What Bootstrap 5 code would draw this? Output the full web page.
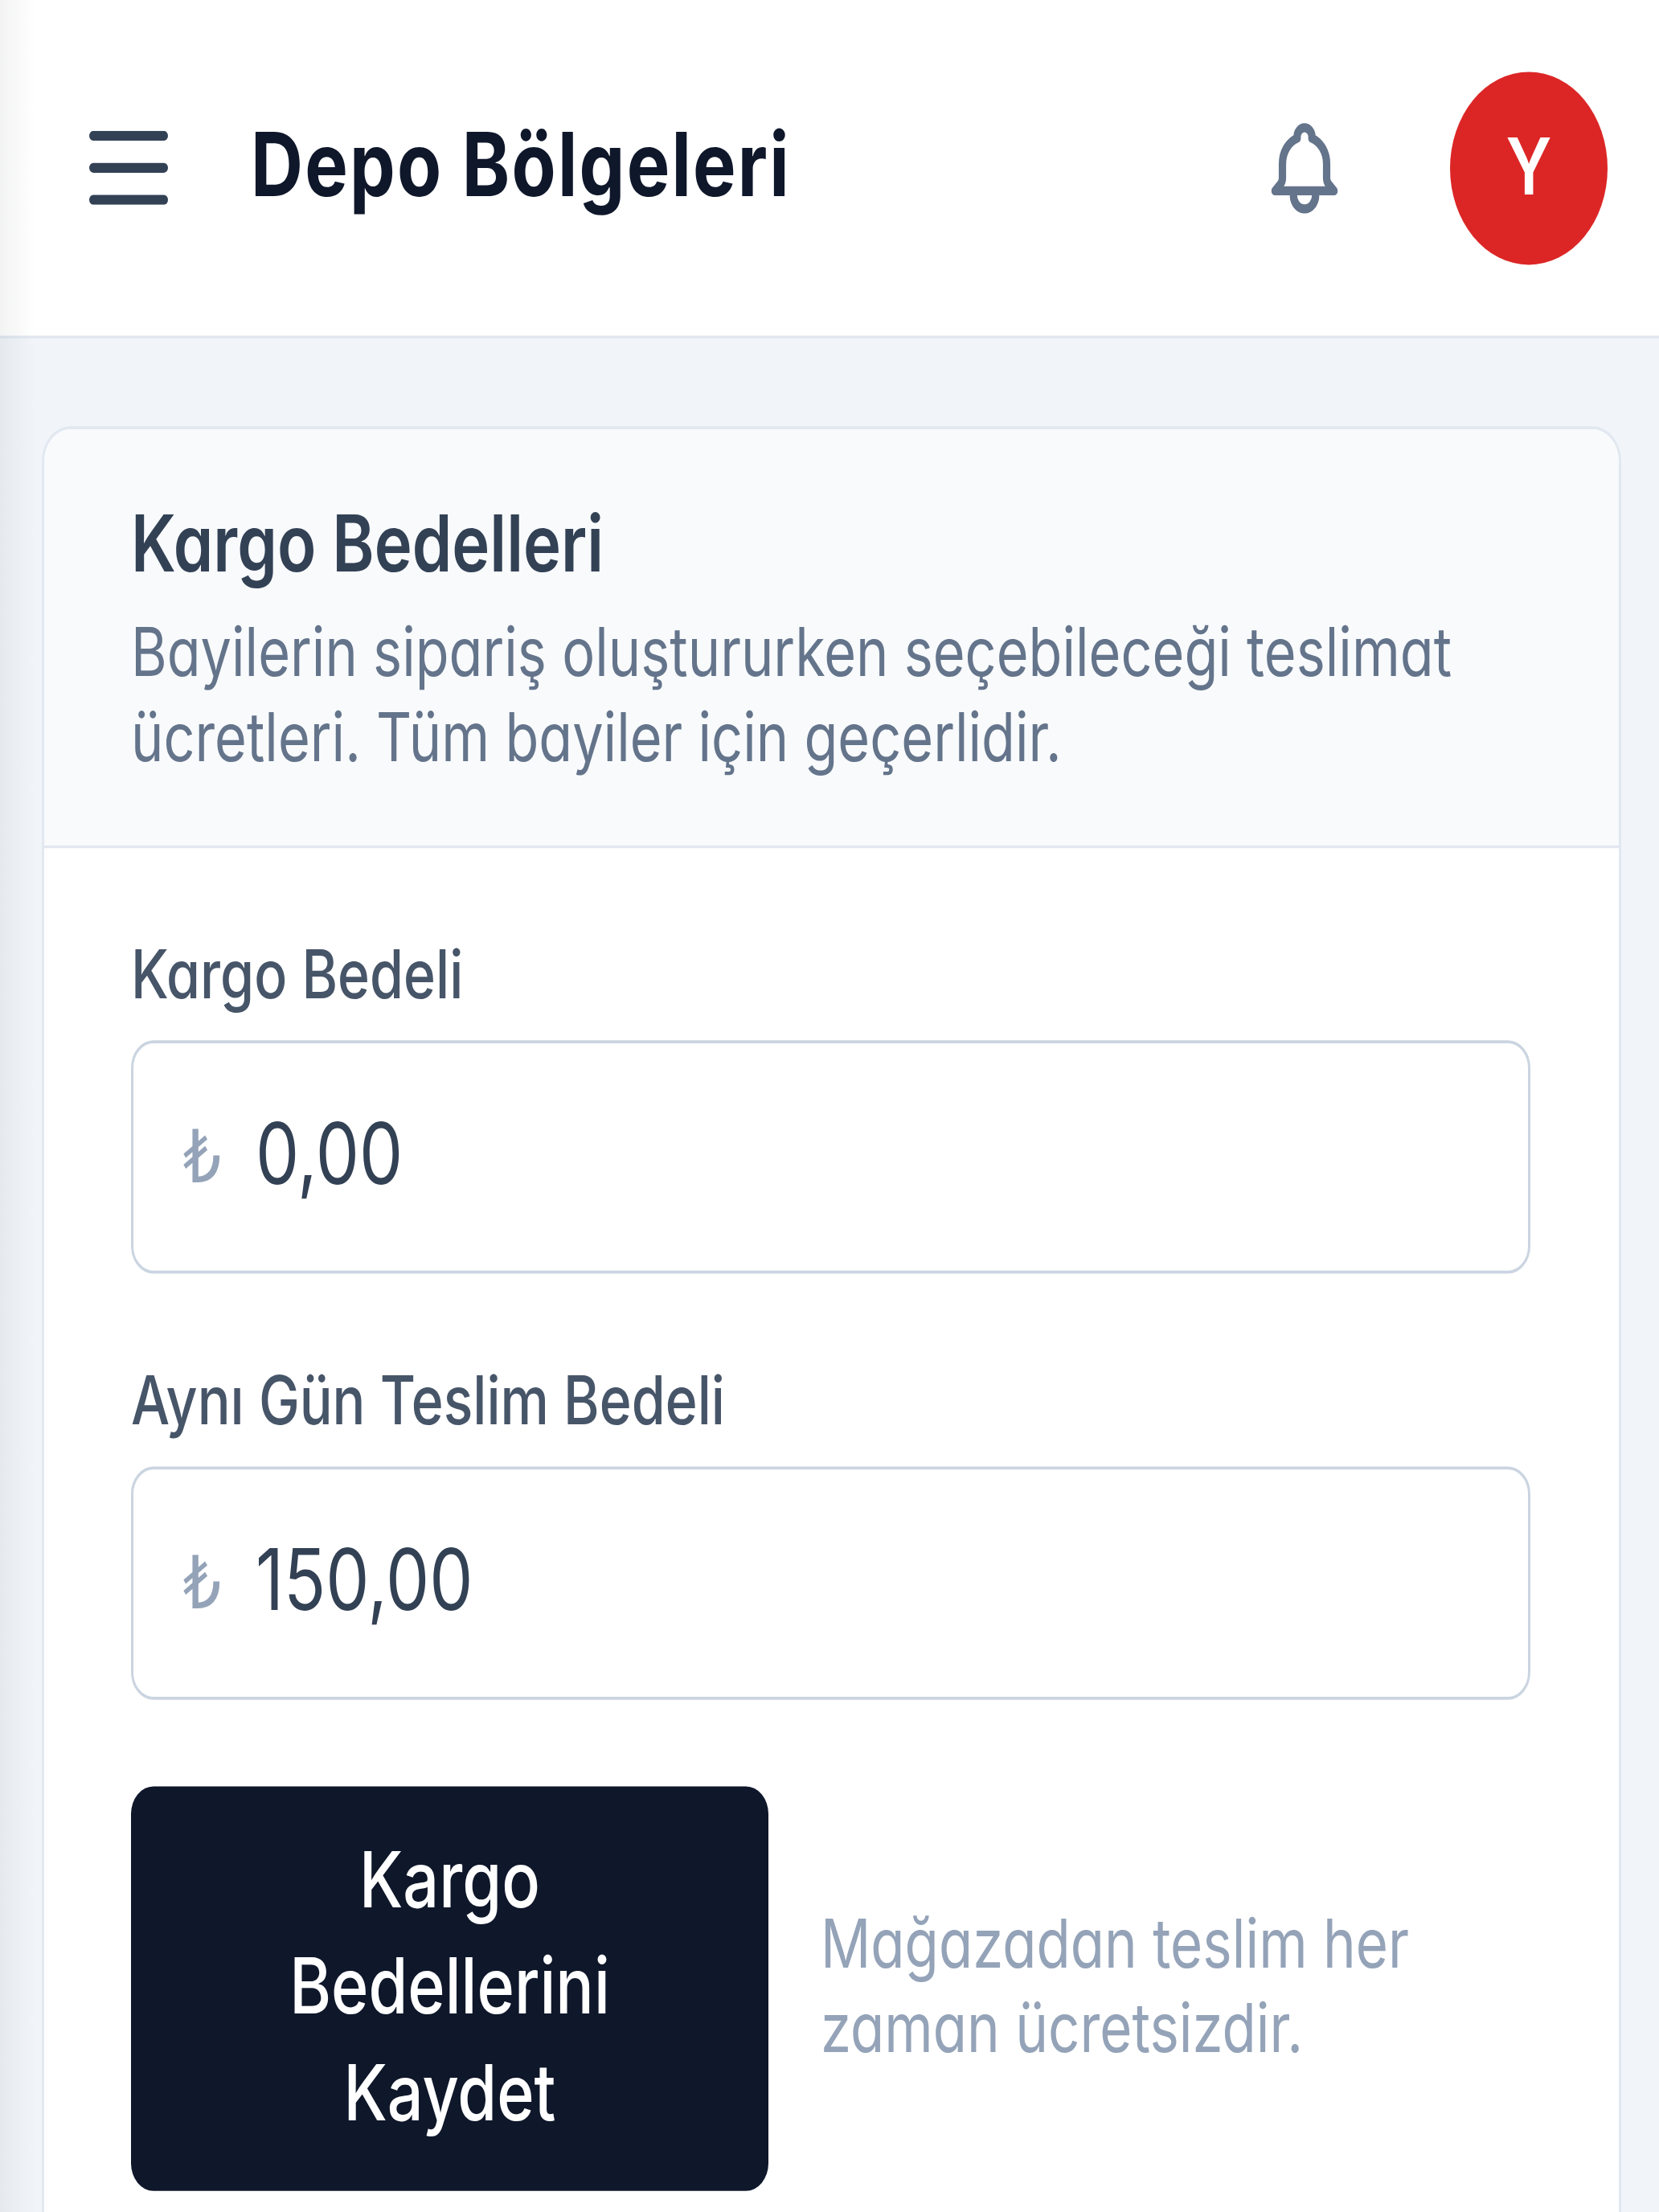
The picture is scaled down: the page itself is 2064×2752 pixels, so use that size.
<!DOCTYPE html>
<html lang="tr">
<head>
    <meta charset="UTF-8">
    <title>Depo Bölgeleri</title>
    <link href="https://cdn.jsdelivr.net/npm/bootstrap@5.3.3/dist/css/bootstrap.min.css" rel="stylesheet">
    <style>
        html, body { height: 2752px; overflow: hidden; background: #f1f5f9; }
        body { position: relative; font-family: Inter, "Noto Sans", sans-serif; font-feature-settings: "cv11"; }

        /* the screenshot is taller than it is wide, so the whole page is stretched */
        .page-stretch { width: 2064px; transform: scaleY(1.2245); transform-origin: top left; }

        .drawer-edge { position: absolute; top: 0; left: 0; width: 44px; height: 2752px; pointer-events: none;
            background: linear-gradient(to right, rgba(15, 23, 42, .05), rgba(15, 23, 42, 0)); }

        .top-bar { height: 344px; padding: 0 64px 0 111px; background: #fff; border-bottom: 3px solid #e2e8f0; }
        .menu-icon { width: 98px; height: 75px; stroke: #334155; }
        .page-title { margin: 0 0 8px 103px; font-size: 90px; letter-spacing: 2.2px; font-weight: 700; color: #0f172a; }
        .bell-icon { width: 110px; height: 110px; margin-right: 126px; stroke: #64748b; }
        .avatar { width: 196px; height: 196px; padding-bottom: 4px; background: #dc2626; color: #fff; font-size: 80px; font-weight: 600; }

        .content-area { padding: 89px 47px 0 52px; }
        .cost-card { --bs-card-border-width: 3px; --bs-card-border-color: #e2e8f0; --bs-card-border-radius: 36px; --bs-card-inner-border-radius: 33px; }
        .cost-card .card-header { padding: 62px 108px 68px; background: #f8fafc; border-bottom: 3px solid #e2e8f0; }
        .cost-card .card-body { padding: 83px 108px 120px; }
        .card-heading { margin: 0 0 13px; font-size: 79.5px; line-height: 108px; font-weight: 600; color: #334155; }
        .card-sub { margin: 0; font-size: 68.4px; line-height: 86px; color: #64748b; }
        .field-label { display: block; margin-bottom: 24px; font-size: 68px; line-height: 88px; font-weight: 500; color: #475569; }
        .money-box { width: 1741px; height: 237px; margin-bottom: 84px; padding-left: 62px; border: 3px solid #cbd5e1; border-radius: 28px; background: #fff; }
        .money-sign { width: 50px; font-family: "DejaVu Sans", sans-serif; font-size: 74px; color: #94a3b8; }
        .money-input { flex: 1; min-width: 0; margin-left: 40px; padding: 0 0 6px; border: 0; outline: 0; font-family: inherit; font-feature-settings: inherit; font-size: 86px; color: #334155; background: transparent; }

        .save-row { margin-top: 88px; gap: 65px; }
        .save-btn { flex: 0 0 793px; height: 411px; padding: 0 120px 8px; border-radius: 28px; border: 0; font-size: 79px; line-height: 108px; font-weight: 500; }
        .save-btn, .save-btn:hover { background: #0f172a; color: #fff; }
        .save-note { margin: 0 0 8px; font-size: 69px; line-height: 86px; color: #94a3b8; }
    </style>
</head>
<body>
    <div class="page-stretch">
        <header class="top-bar d-flex align-items-center">
            <svg class="menu-icon" viewBox="0 0 98 75" fill="none" stroke-width="10" stroke-linecap="round">
                <path d="M5 5H93M5 37.5H93M5 70H93"/>
            </svg>
            <h1 class="page-title">Depo Bölgeleri</h1>
            <svg class="bell-icon ms-auto" viewBox="0 0 24 24" fill="none" stroke-width="2" stroke-linecap="round" stroke-linejoin="round">
                <path d="M15 17h5l-1.405-1.405A2.032 2.032 0 0118 14.158V11a6.002 6.002 0 00-4-5.659V5a2 2 0 10-4 0v.341C7.67 6.165 6 8.388 6 11v3.159c0 .538-.214 1.055-.595 1.436L4 17h5m6 0v1a3 3 0 11-6 0v-1m6 0H9"/>
            </svg>
            <div class="avatar rounded-circle d-flex align-items-center justify-content-center">Y</div>
        </header>

        <main class="content-area">
            <div class="card cost-card">
                <div class="card-header">
                    <h2 class="card-heading">Kargo Bedelleri</h2>
                    <p class="card-sub">Bayilerin sipariş oluştururken seçebileceği teslimat ücretleri. Tüm bayiler için geçerlidir.</p>
                </div>
                <div class="card-body">
                    <label class="field-label" for="cargoFee">Kargo Bedeli</label>
                    <div class="money-box d-flex align-items-center">
                        <span class="money-sign">₺</span>
                        <input class="money-input" id="cargoFee" type="text" value="0,00">
                    </div>
                    <label class="field-label" for="sameDayFee">Aynı Gün Teslim Bedeli</label>
                    <div class="money-box d-flex align-items-center">
                        <span class="money-sign">₺</span>
                        <input class="money-input" id="sameDayFee" type="text" value="150,00">
                    </div>
                    <div class="save-row d-flex align-items-center">
                        <button class="btn save-btn" type="button">Kargo Bedellerini Kaydet</button>
                        <p class="save-note">Mağazadan teslim her zaman ücretsizdir.</p>
                    </div>
                </div>
            </div>
        </main>
    </div>
    <div class="drawer-edge"></div>
    <script src="https://cdn.jsdelivr.net/npm/bootstrap@5.3.3/dist/js/bootstrap.bundle.min.js"></script>
</body>
</html>
